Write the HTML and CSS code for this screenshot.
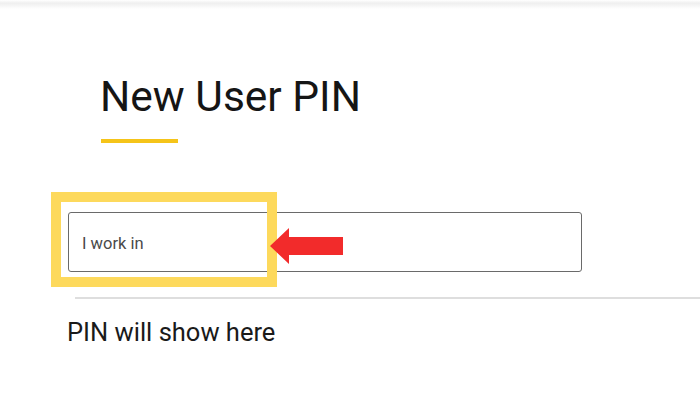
FILE: index.html
```html
<!DOCTYPE html>
<html lang="en">
<head>
<meta charset="utf-8">
<title>New User PIN</title>
<link rel="stylesheet" href="styles.css">
</head>
<body>
<div class="topbar"></div>
<main class="page">
  <h1 class="title">New User PIN</h1>
  <div class="accent"></div>
  <div class="field-row">
    <input class="field" type="text" placeholder="I work in">
    <div class="highlight"></div>
    <svg class="arrow" width="73" height="36" viewBox="0 0 73 36" aria-hidden="true">
      <polygon points="0,18 19,0 19,9 73,9 73,27 19,27 19,36" fill="#f22b2b"/>
    </svg>
  </div>
  <hr class="divider">
  <p class="result">PIN will show here</p>
</main>
</body>
</html>
```

FILE: styles.css
```css
html, body {
  margin: 0;
  padding: 0;
  background: #ffffff;
}

body {
  font-family: Roboto, "Liberation Sans", sans-serif;
  color: #1a1a1a;
}

.topbar {
  height: 9px;
  background: linear-gradient(to bottom, #ffffff 0%, #efefef 35%, #f6f6f6 65%, #ffffff 100%);
}

.page {
  display: flex;
  flex-direction: column;
  align-items: flex-start;
}

.title {
  margin: 67px 0 0 100px;
  font-size: 42.5px;
  line-height: 42px;
  font-weight: 400;
  color: #151515;
}

.accent {
  margin: 21px 0 0 101px;
  width: 77px;
  height: 4px;
  background: #f5c419;
}

.field-row {
  position: relative;
  margin: 69px 0 0 68px;
}

.field {
  display: block;
  box-sizing: border-box;
  width: 514px;
  height: 60px;
  margin: 0;
  padding: 2px 0 0 13px;
  border: 1px solid #6a6a6a;
  border-radius: 3px;
  font-family: Roboto, "Liberation Sans", sans-serif;
  font-size: 16.5px;
  color: #4a4a4a;
  background: #ffffff;
  outline: none;
}

.field::placeholder {
  color: #4a4a4a;
  opacity: 1;
}

.highlight {
  position: absolute;
  left: -17px;
  top: -20px;
  width: 206px;
  height: 75px;
  border: 10px solid #fdd95c;
}

.arrow {
  position: absolute;
  left: 202px;
  top: 16px;
  display: block;
}

.divider {
  align-self: stretch;
  margin: 25px 0 0 75px;
  height: 2px;
  border: 0;
  background: #dedede;
}

.result {
  margin: 20px 0 0 67px;
  font-size: 25.5px;
  line-height: 26px;
  color: #1a1a1a;
}
```
